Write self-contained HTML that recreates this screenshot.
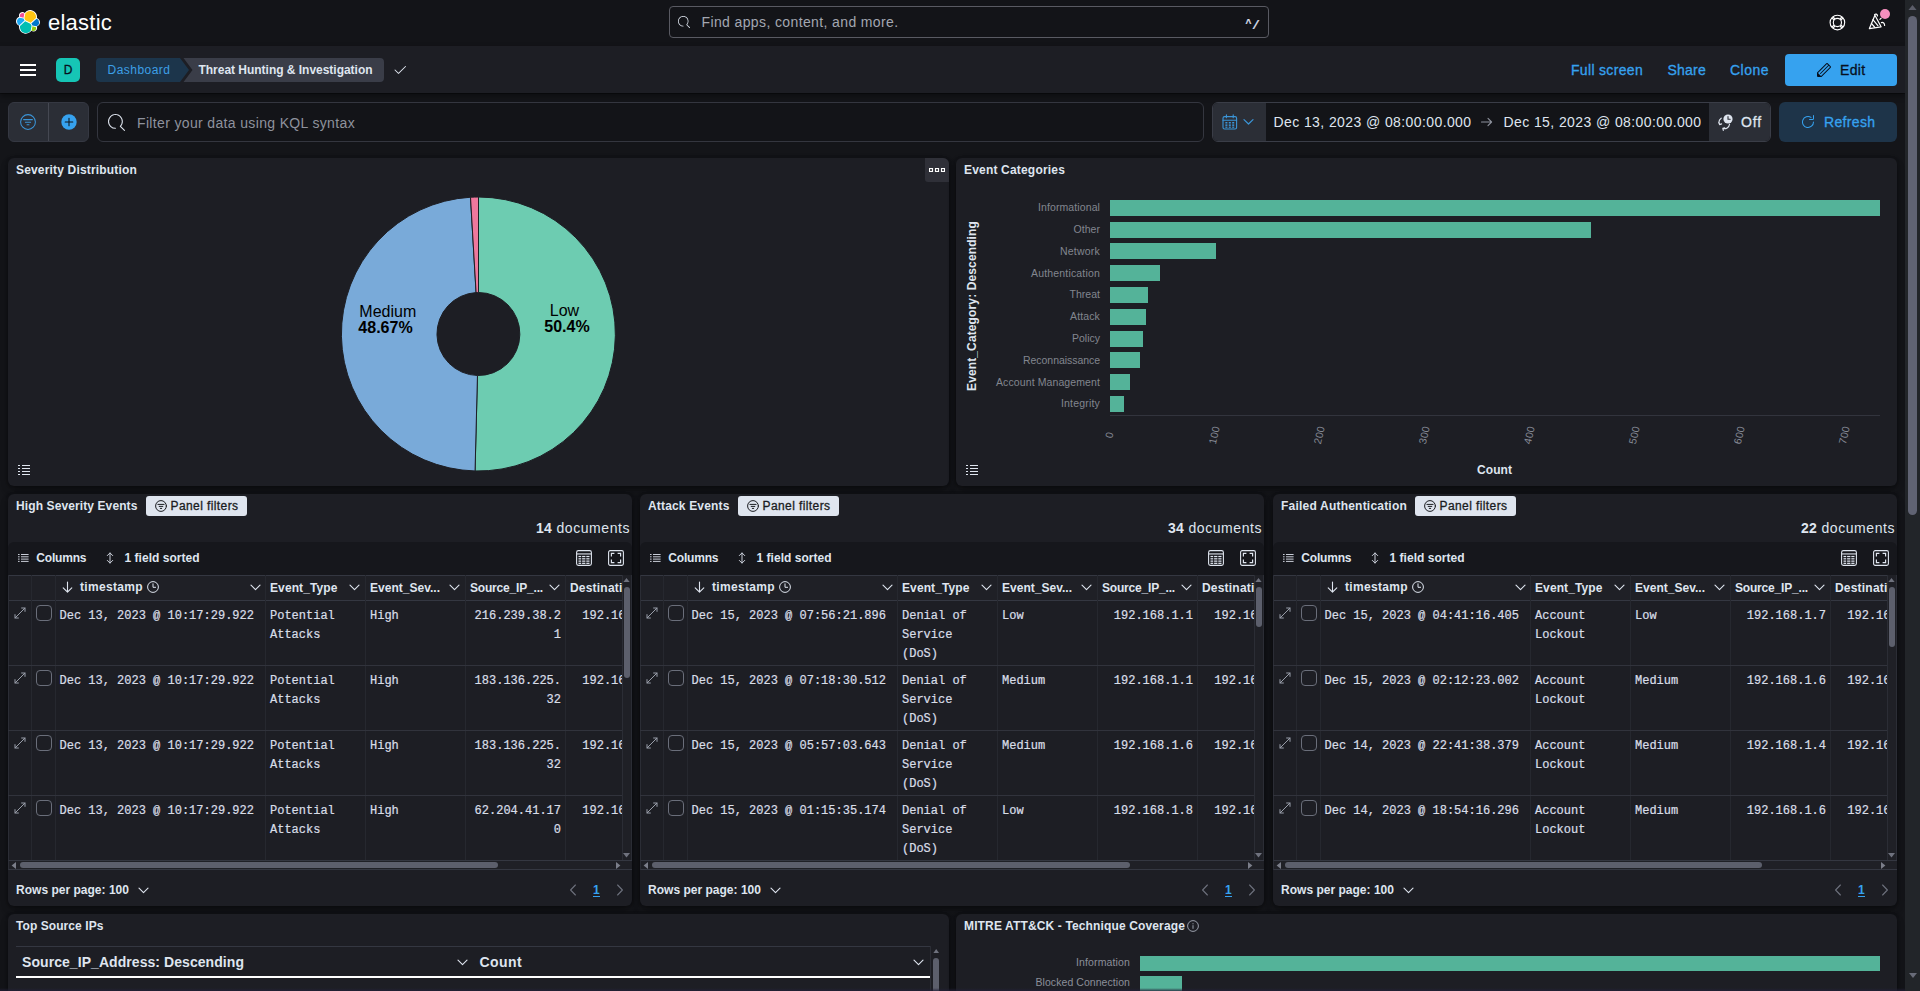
<!DOCTYPE html>
<html lang="en"><head><meta charset="utf-8"><title>Threat Hunting &amp; Investigation - Elastic</title>
<style>
html,body{margin:0;padding:0;background:#141519;}
body{width:1920px;height:991px;overflow:hidden;font-family:"Liberation Sans",sans-serif;color:#dfe5ef;-webkit-font-smoothing:antialiased;}
#root{position:relative;width:1920px;height:991px;overflow:hidden;background:#141519;}
.b{position:absolute;box-sizing:border-box;display:block;}
.t{position:absolute;white-space:pre;display:block;}
.panel{position:absolute;box-sizing:border-box;background:#1d1e24;border-radius:6px;box-shadow:0 1px 4px -1px rgba(0,0,0,.3),0 3px 8px -1px rgba(0,0,0,.22),0 6px 12px -2px rgba(0,0,0,.18),0 0 3px rgba(0,0,0,.1);}
.md{-webkit-text-stroke:0.3px currentColor;}
.m{font-family:"Liberation Mono","DejaVu Sans Mono",monospace;-webkit-text-stroke:0.22px currentColor;color:#d8dde7 !important;}

</style></head>
<body>
<div id="root">
<div class="b" style="left:0px;top:0px;width:1905px;height:46px;background:#131418;"></div>
<svg class="b" style="left:16px;top:10px;" width="24" height="24" viewBox="0 0 32 32"><g fill="none" fill-rule="evenodd"><path fill="#FFF" d="M32 16.77a6.334 6.334 0 00-1.14-3.63 6.298 6.298 0 00-3.02-2.32 9.098 9.098 0 00-.873-5.86A9.05 9.05 0 0022.663.898a9.003 9.003 0 00-5.994-.46 9.037 9.037 0 00-4.969 3.4 4.807 4.807 0 00-5.968-.06 4.868 4.868 0 00-1.58 2.34 4.903 4.903 0 00.04 2.83A6.374 6.374 0 001.16 11.28 6.41 6.41 0 000 14.94a6.343 6.343 0 001.145 3.65 6.307 6.307 0 003.035 2.32 9.038 9.038 0 001.296 6.62 8.99 8.99 0 005.526 3.86 8.926 8.926 0 003.555.08 8.957 8.957 0 003.31-1.31 9.022 9.022 0 002.507-2.53 4.772 4.772 0 002.94 1.02 4.806 4.806 0 003.96-2.06 4.866 4.866 0 00.583-4.45 6.385 6.385 0 003.016-2.34A6.42 6.42 0 0032 16.77"/><path fill="#FEC514" d="M12.58 13.787l7.002 3.211 7.066-6.213a7.849 7.849 0 00.152-1.557c0-1.692-.54-3.34-1.537-4.704a7.912 7.912 0 00-4.02-2.869 7.875 7.875 0 00-4.932.086 7.913 7.913 0 00-3.92 3.007l-1.174 6.118 1.364 2.921z"/><path fill="#00BFB3" d="M5.333 21.228a7.964 7.964 0 001.387 6.273 7.914 7.914 0 004.034 2.887 7.876 7.876 0 004.95-.097 7.916 7.916 0 003.924-3.029l1.166-6.102-1.555-2.985-7.03-3.211-6.876 6.264z"/><path fill="#F04E98" d="M5.288 9.067l4.8 1.137L11.14 4.74a3.785 3.785 0 00-4.538-.056 3.81 3.81 0 00-1.314 4.383"/><path fill="#1BA9F5" d="M4.872 10.214a5.294 5.294 0 00-2.595 1.882 5.324 5.324 0 00-.142 6.124 5.287 5.287 0 002.505 2l6.733-6.101-1.235-2.65-5.266-1.255z"/><path fill="#93C90E" d="M20.873 27.277a3.736 3.736 0 002.285.785 3.783 3.783 0 003.101-1.63 3.812 3.812 0 00.456-3.479l-4.8-1.125-1.042 5.449z"/><path fill="#07C" d="M21.848 20.563l5.284 1.242a5.34 5.34 0 002.595-1.884 5.37 5.37 0 00.143-6.14 5.33 5.33 0 00-2.505-2.01l-6.911 6.075 1.394 2.717z"/></g></svg>
<span class="t " style="left:48.00px;top:8.10px;font-size:22px;line-height:30px;color:#ffffff;letter-spacing:0.234px;">elastic</span>
<div class="b" style="left:669px;top:6px;width:600px;height:32px;background:#131418;border:1px solid #595a62;border-radius:4px;"></div>
<svg class="b" style="left:678px;top:16px;" width="12" height="12" viewBox="0 0 16 16"><path fill="#dfe5ef" d="M11.271 11.978l3.872 3.873a.502.502 0 00.708 0 .502.502 0 000-.708l-3.565-3.564c2.38-2.747 2.267-6.923-.342-9.532-2.73-2.73-7.17-2.73-9.898 0-2.728 2.729-2.728 7.17 0 9.9a6.955 6.955 0 004.949 2.05.5.5 0 000-1 5.96 5.96 0 01-4.242-1.757 6.01 6.01 0 010-8.486c2.337-2.34 6.143-2.34 8.484 0a6.01 6.01 0 010 8.486.5.5 0 00.034.738z"/></svg>
<span class="t " style="left:701.50px;top:11.50px;font-size:14px;line-height:21px;color:#a3a7b1;letter-spacing:0.379px;">Find apps, content, and more.</span>
<span class="t  m" style="left:1245.60px;top:17.40px;font-size:10px;line-height:16px;color:#ffffff;font-weight:700;">^</span>
<span class="t  m" style="left:1252.00px;top:17.90px;font-size:13px;line-height:16px;color:#ffffff;font-weight:700;">/</span>
<svg class="b" style="left:1828.5px;top:13.5px;" width="17" height="17" viewBox="0 0 17 17"><g fill="none" stroke="#fff" stroke-width="1.15"><circle cx="8.4" cy="8.5" r="7.3"/><circle cx="8.4" cy="8.5" r="4.1"/><path d="M2.7 3.9l2.5 2.1M3.9 2.7l2.1 2.5M14.3 3.9l-2.5 2.1M13.1 2.7l-2.1 2.5M2.7 13.1l2.5-2.1M3.9 14.3l2.1-2.5M14.3 13.1l-2.5-2.1M13.1 14.3l-2.1-2.5"/></g></svg>
<svg class="b" style="left:1868px;top:13px;" width="18" height="18" viewBox="0 0 18 18"><g fill="none" stroke="#fff" stroke-width="1.2" stroke-linejoin="round" stroke-linecap="round"><path d="M1.4 15.6L6.9 2.3L13.1 13.8z"/><path d="M4.9 6.6l5 6M3.4 10.4l3.1 3.6M6.6 1.6c.9-1 2.6-.6 2.9 1.2M11.9 6.4l1.2-1.1M13.4 9.6c1.8-.5 3.2.6 3.2 2.8"/></g></svg>
<div class="b" style="left:1879.7px;top:8.8px;width:10.6px;height:10.6px;background:#f68fbe;border-radius:50%;"></div>
<div class="b" style="left:0px;top:46px;width:1905px;height:47px;background:#1d1e24;box-shadow:0 1px 0 rgba(0,0,0,.35),0 3px 6px rgba(0,0,0,.4);"></div>
<div class="b" style="left:20px;top:64px;width:16px;height:2px;background:#ffffff;"></div>
<div class="b" style="left:20px;top:69px;width:16px;height:2px;background:#ffffff;"></div>
<div class="b" style="left:20px;top:74px;width:16px;height:2px;background:#ffffff;"></div>
<div class="b" style="left:56px;top:58px;width:24px;height:24px;background:#16c5b5;border-radius:5px;"></div>
<span class="t md" style="left:63.67px;top:61.00px;font-size:12px;line-height:18px;color:#07101f;">D</span>
<svg class="b" style="left:96px;top:58px" width="290" height="24" viewBox="0 0 290 24"><path d="M4 0H84L93 12L84 24H4a4 4 0 01-4-4V4a4 4 0 014-4z" fill="#1c354b"/><path d="M87.5 0H284a4 4 0 014 4v16a4 4 0 01-4 4H87.5L96.5 12z" fill="#3a3d48"/></svg>
<span class="t " style="left:107.50px;top:61.00px;font-size:12px;line-height:18px;color:#3c9fe6;letter-spacing:0.477px;">Dashboard</span>
<span class="t " style="left:198.50px;top:61.00px;font-size:12px;line-height:18px;color:#dfe5ef;font-weight:700;letter-spacing:-0.022px;">Threat Hunting &amp; Investigation</span>
<svg class="b" style="left:392px;top:62px;" width="16" height="16" viewBox="0 0 16 16"><path fill="#dfe5ef" fill-rule="evenodd" d="M6.50025 12.00025c-.128 0-.256-.049-.354-.146l-3.5-3.5c-.195-.196-.195-.512 0-.708.196-.195.512-.195.708 0l3.146 3.147 6.646-6.647c.196-.195.512-.195.708 0 .195.196.195.512 0 .708l-7 7c-.098.097-.226.146-.354.146"/></svg>
<span class="t md" style="left:1571.00px;top:59.50px;font-size:14px;line-height:21px;color:#36a2ef;letter-spacing:0.321px;">Full screen</span>
<span class="t md" style="left:1667.50px;top:59.50px;font-size:14px;line-height:21px;color:#36a2ef;letter-spacing:0.228px;">Share</span>
<span class="t md" style="left:1730.00px;top:59.50px;font-size:14px;line-height:21px;color:#36a2ef;letter-spacing:0.484px;">Clone</span>
<div class="b" style="left:1785px;top:54px;width:112px;height:32px;background:#36a2ef;border-radius:4px;"></div>
<svg class="b" style="left:1816px;top:62px;" width="16" height="16" viewBox="0 0 16 16"><path fill="#07101f" d="M12.148 3.148L11 2l-9 9v3h3l9-9-1.144-1.144-8.002 7.998a.502.502 0 01-.708 0 .502.502 0 010-.708l8.002-7.998zM11 1c.256 0 .512.098.707.293l3 3a.999.999 0 010 1.414l-9 9A.997.997 0 015 15H2a1 1 0 01-1-1v-3c0-.265.105-.52.293-.707l9-9A.997.997 0 0111 1zM5 14H2v-3l3 3z"/></svg>
<span class="t md" style="left:1840.00px;top:59.50px;font-size:14px;line-height:21px;color:#07101f;letter-spacing:0.344px;">Edit</span>
<div class="b" style="left:8px;top:102px;width:81px;height:40px;background:#2b2e36;border-radius:6px;border:1px solid #353842;"></div>
<div class="b" style="left:48px;top:103px;width:1px;height:38px;background:#454852;"></div>
<svg class="b" style="left:20px;top:114px;" width="16" height="16" viewBox="0 0 16 16"><g fill="none" stroke="#3b95d8" stroke-width="1.05" stroke-linecap="round"><circle cx="8" cy="8" r="7.4"/><path d="M3.6 5.6h8.8M5.4 8.2h5.2M7 10.8h2"/></g></svg>
<svg class="b" style="left:60.5px;top:113.5px;" width="16" height="16" viewBox="0 0 16 16"><circle cx="8" cy="8" r="7.7" fill="#36a2ef"/><path d="M8 4.2v7.6M4.2 8h7.6" stroke="#10151c" stroke-width="1.05" stroke-linecap="round"/></svg>
<div class="b" style="left:97px;top:102px;width:1107px;height:40px;background:#131418;border:1px solid #34363f;border-radius:6px;"></div>
<svg class="b" style="left:108px;top:113.5px;" width="17" height="17" viewBox="0 0 16 16"><path fill="#dfe5ef" d="M11.271 11.978l3.872 3.873a.502.502 0 00.708 0 .502.502 0 000-.708l-3.565-3.564c2.38-2.747 2.267-6.923-.342-9.532-2.73-2.73-7.17-2.73-9.898 0-2.728 2.729-2.728 7.17 0 9.9a6.955 6.955 0 004.949 2.05.5.5 0 000-1 5.96 5.96 0 01-4.242-1.757 6.01 6.01 0 010-8.486c2.337-2.34 6.143-2.34 8.484 0a6.01 6.01 0 010 8.486.5.5 0 00.034.738z"/></svg>
<span class="t " style="left:137.00px;top:112.50px;font-size:14px;line-height:21px;color:#8e929d;letter-spacing:0.349px;">Filter your data using KQL syntax</span>
<div class="b" style="left:1212px;top:102px;width:559px;height:40px;background:#131418;border:1px solid #3a3d47;border-radius:6px;overflow:hidden;"><div class="b" style="left:0;top:0;width:53px;height:38px;background:#2b2e36"></div><div class="b" style="left:496px;top:0;width:62px;height:38px;background:#2b2e36"></div></div>
<svg class="b" style="left:1222px;top:114px;" width="16" height="16" viewBox="0 0 16 16"><g fill="none" stroke="#3b95d8" stroke-width="1.1"><rect x="1" y="2.6" width="13.6" height="12.4" rx="1.6"/><path d="M1 6.2h13.6M4.4 0.8v3M11.2 0.8v3" stroke-linecap="round"/></g><g fill="#3b95d8"><rect x="3.4" y="8" width="2" height="1.5"/><rect x="6.8" y="8" width="2" height="1.5"/><rect x="10.2" y="8" width="2" height="1.5"/><rect x="3.4" y="10.4" width="2" height="1.5"/><rect x="6.8" y="10.4" width="2" height="1.5"/><rect x="10.2" y="10.4" width="2" height="1.5"/><rect x="3.4" y="12.6" width="2" height="1.2"/><rect x="6.8" y="12.6" width="2" height="1.2"/><rect x="10.2" y="12.6" width="2" height="1.2"/></g></svg>
<svg class="b" style="left:1243px;top:117px;" width="11" height="10" viewBox="0 0 11 10"><path d="M1 2.6l4.5 4.4 4.5-4.4" fill="none" stroke="#3b95d8" stroke-width="1.2" stroke-linecap="round" stroke-linejoin="round"/></svg>
<span class="t " style="left:1273.50px;top:111.50px;font-size:14px;line-height:21px;color:#dfe5ef;letter-spacing:0.407px;">Dec 13, 2023 @ 08:00:00.000</span>
<svg class="b" style="left:1480px;top:115px;" width="14" height="14" viewBox="0 0 14 14"><path d="M1.5 7h10M8 3.4L11.6 7 8 10.6" fill="none" stroke="#8e929d" stroke-width="1.1" stroke-linecap="round" stroke-linejoin="round"/></svg>
<span class="t " style="left:1503.50px;top:111.50px;font-size:14px;line-height:21px;color:#dfe5ef;letter-spacing:0.407px;">Dec 15, 2023 @ 08:00:00.000</span>
<svg class="b" style="left:1717px;top:113px;" width="18" height="18" viewBox="0 0 18 18"><g fill="none" stroke="#dfe5ef" stroke-width="1.15" stroke-linecap="round"><path d="M4.2 5.2a5.2 5.2 0 00-1.6 6.4M2.6 11.6l-.9-2M2.6 11.6l2-.7M12.6 11.2a5.2 5.2 0 01-6.8 4.2M5.8 15.4l2-.6M5.8 15.4l.5 2"/></g><circle cx="11" cy="6" r="4.6" fill="#dfe5ef"/><path d="M11 3.6V6.2h2.2" fill="none" stroke="#2b2e36" stroke-width="1.1" stroke-linecap="round"/></svg>
<span class="t md" style="left:1741.00px;top:111.50px;font-size:14px;line-height:21px;color:#dfe5ef;letter-spacing:0.861px;">Off</span>
<div class="b" style="left:1779px;top:102px;width:118px;height:40px;background:#1e3449;border-radius:6px;"></div>
<svg class="b" style="left:1800px;top:114px;" width="16" height="16" viewBox="0 0 16 16"><path fill="#36a2ef" d="M11.228 2.942a.5.5 0 11-.538.842A5 5 0 1013 8a.5.5 0 111 0 6 6 0 11-2.772-5.058zM14 1.5v3A1.5 1.5 0 0112.5 6h-3a.5.5 0 010-1h3a.5.5 0 00.5-.5v-3a.5.5 0 111 0z"/></svg>
<span class="t md" style="left:1824.00px;top:111.50px;font-size:14px;line-height:21px;color:#36a2ef;letter-spacing:0.354px;">Refresh</span>
<div class="panel" style="left:8px;top:158px;width:941px;height:328px"></div>
<span class="t " style="left:16.00px;top:161.00px;font-size:12px;line-height:18px;color:#dfe5ef;font-weight:700;letter-spacing:0.173px;">Severity Distribution</span>
<div class="b" style="left:925px;top:158px;width:24px;height:24px;background:#2f3038;border-radius:0 6px 0 3px;"></div>
<svg class="b" style="left:929px;top:168px;" width="16" height="4" viewBox="0 0 16 4"><g fill="none" stroke="#ffffff" stroke-width="1.15"><rect x="0.5" y="0.5" width="3" height="3"/><rect x="6.5" y="0.5" width="3" height="3"/><rect x="12.5" y="0.5" width="3" height="3"/></g></svg>
<svg class="b" style="left:18px;top:465px;" width="12" height="10" viewBox="0 0 12 10"><g fill="#dfe5ef"><rect x="0" y="0" width="2" height="1"/><rect x="4" y="0" width="8" height="1"/><rect x="0" y="3" width="2" height="1"/><rect x="4" y="3" width="8" height="1"/><rect x="0" y="6" width="2" height="1"/><rect x="4" y="6" width="8" height="1"/><rect x="0" y="9" width="2" height="1"/><rect x="4" y="9" width="8" height="1"/></g></svg>
<svg class="b" style="left:0;top:0" width="960" height="500" viewBox="0 0 960 500"><path d="M478.50 197.00A137 137 0 1 1 475.06 470.96L477.46 375.49A41.5 41.5 0 1 0 478.50 292.50Z" fill="#6dccb1" stroke="#1d1e24" stroke-width="1"/><path d="M475.06 470.96A137 137 0 0 1 470.50 197.23L476.08 292.57A41.5 41.5 0 0 0 477.46 375.49Z" fill="#79aad9" stroke="#1d1e24" stroke-width="1"/><path d="M470.50 197.23A137 137 0 0 1 478.50 197.00L478.50 292.50A41.5 41.5 0 0 0 476.08 292.57Z" fill="#ee789d" stroke="#1d1e24" stroke-width="1"/><g font-family="Liberation Sans, sans-serif" font-size="16" fill="#000" text-anchor="middle"><text x="387.8" y="316.6">Medium</text><text x="385.5" y="333" font-weight="700">48.67%</text><text x="564.5" y="315.6">Low</text><text x="567" y="332" font-weight="700">50.4%</text></g></svg>
<div class="panel" style="left:956px;top:158px;width:941px;height:328px"></div>
<span class="t " style="left:964.00px;top:161.00px;font-size:12px;line-height:18px;color:#dfe5ef;font-weight:700;letter-spacing:0.185px;">Event Categories</span>
<svg class="b" style="left:966px;top:465px;" width="12" height="10" viewBox="0 0 12 10"><g fill="#dfe5ef"><rect x="0" y="0" width="2" height="1"/><rect x="4" y="0" width="8" height="1"/><rect x="0" y="3" width="2" height="1"/><rect x="4" y="3" width="8" height="1"/><rect x="0" y="6" width="2" height="1"/><rect x="4" y="6" width="8" height="1"/><rect x="0" y="9" width="2" height="1"/><rect x="4" y="9" width="8" height="1"/></g></svg>
<div class="b" style="left:1110px;top:200px;width:770px;height:16px;background:#54b399;"></div>
<span class="t " style="left:1038.00px;top:200.10px;font-size:10.5px;line-height:14px;color:#82868f;letter-spacing:0.100px;">Informational</span>
<div class="b" style="left:1110px;top:222px;width:480.7px;height:16px;background:#54b399;"></div>
<span class="t " style="left:1073.50px;top:221.92px;font-size:10.5px;line-height:14px;color:#82868f;letter-spacing:0.048px;">Other</span>
<div class="b" style="left:1110px;top:243px;width:106px;height:16px;background:#54b399;"></div>
<span class="t " style="left:1060.00px;top:243.74px;font-size:10.5px;line-height:14px;color:#82868f;letter-spacing:0.213px;">Network</span>
<div class="b" style="left:1110px;top:265px;width:49.6px;height:16px;background:#54b399;"></div>
<span class="t " style="left:1031.00px;top:265.56px;font-size:10.5px;line-height:14px;color:#82868f;letter-spacing:0.175px;">Authentication</span>
<div class="b" style="left:1110px;top:287px;width:38px;height:16px;background:#54b399;"></div>
<span class="t " style="left:1069.50px;top:287.38px;font-size:10.5px;line-height:14px;color:#82868f;letter-spacing:0.026px;">Threat</span>
<div class="b" style="left:1110px;top:309px;width:36px;height:16px;background:#54b399;"></div>
<span class="t " style="left:1070.00px;top:309.20px;font-size:10.5px;line-height:14px;color:#82868f;letter-spacing:0.137px;">Attack</span>
<div class="b" style="left:1110px;top:331px;width:32.6px;height:16px;background:#54b399;"></div>
<span class="t " style="left:1072.00px;top:331.02px;font-size:10.5px;line-height:14px;color:#82868f;letter-spacing:-0.001px;">Policy</span>
<div class="b" style="left:1110px;top:352px;width:29.5px;height:16px;background:#54b399;"></div>
<span class="t " style="left:1023.00px;top:352.84px;font-size:10.5px;line-height:14px;color:#82868f;letter-spacing:-0.045px;">Reconnaissance</span>
<div class="b" style="left:1110px;top:374px;width:20px;height:16px;background:#54b399;"></div>
<span class="t " style="left:996.00px;top:374.66px;font-size:10.5px;line-height:14px;color:#82868f;letter-spacing:0.103px;">Account Management</span>
<div class="b" style="left:1110px;top:396px;width:13.8px;height:16px;background:#54b399;"></div>
<span class="t " style="left:1061.00px;top:396.48px;font-size:10.5px;line-height:14px;color:#82868f;letter-spacing:0.183px;">Integrity</span>
<div class="b" style="left:1110px;top:414.5px;width:770px;height:1px;background:#32343d;"></div>
<span class="t" style="left:1108.7px;top:435.3px;font-size:10.5px;line-height:12px;color:#858994;letter-spacing:0.25px;transform:translate(-50%,-50%) rotate(-77deg)">0</span>
<span class="t" style="left:1213.7px;top:435.3px;font-size:10.5px;line-height:12px;color:#858994;letter-spacing:0.25px;transform:translate(-50%,-50%) rotate(-77deg)">100</span>
<span class="t" style="left:1318.7px;top:435.3px;font-size:10.5px;line-height:12px;color:#858994;letter-spacing:0.25px;transform:translate(-50%,-50%) rotate(-77deg)">200</span>
<span class="t" style="left:1423.7px;top:435.3px;font-size:10.5px;line-height:12px;color:#858994;letter-spacing:0.25px;transform:translate(-50%,-50%) rotate(-77deg)">300</span>
<span class="t" style="left:1528.7px;top:435.3px;font-size:10.5px;line-height:12px;color:#858994;letter-spacing:0.25px;transform:translate(-50%,-50%) rotate(-77deg)">400</span>
<span class="t" style="left:1633.7px;top:435.3px;font-size:10.5px;line-height:12px;color:#858994;letter-spacing:0.25px;transform:translate(-50%,-50%) rotate(-77deg)">500</span>
<span class="t" style="left:1738.7px;top:435.3px;font-size:10.5px;line-height:12px;color:#858994;letter-spacing:0.25px;transform:translate(-50%,-50%) rotate(-77deg)">600</span>
<span class="t" style="left:1843.7px;top:435.3px;font-size:10.5px;line-height:12px;color:#858994;letter-spacing:0.25px;transform:translate(-50%,-50%) rotate(-77deg)">700</span>
<span class="t " style="left:1477.00px;top:461.00px;font-size:12px;line-height:18px;color:#dfe5ef;font-weight:700;letter-spacing:0.069px;">Count</span>
<span class="t" style="left:964.5px;top:391px;font-size:12px;line-height:14px;font-weight:700;color:#dfe5ef;letter-spacing:0.126px;transform-origin:0 0;transform:rotate(-90deg)">Event_Category: Descending</span>
<div class="panel" style="left:8px;top:494px;width:624px;height:412px"></div>
<span class="t " style="left:16.00px;top:497.00px;font-size:12px;line-height:18px;color:#dfe5ef;font-weight:700;letter-spacing:0.106px;">High Severity Events</span>
<div class="b" style="left:146px;top:496px;width:101px;height:20px;background:#dfe5ef;border-radius:3px;"></div>
<svg class="b" style="left:154.8px;top:500px;" width="12" height="12" viewBox="0 0 12 12"><g fill="none" stroke="#1a1c21" stroke-width="1" stroke-linecap="round"><circle cx="6" cy="6" r="5.4"/><path d="M2.9 4.4h6.2M4.2 6.4h3.6M5.3 8.4h1.4"/></g></svg>
<span class="t md" style="left:170.50px;top:497.00px;font-size:12px;line-height:18px;color:#1a1c21;letter-spacing:0.408px;">Panel filters</span>
<span class="t " style="left:536.00px;top:517.50px;font-size:14px;line-height:21px;color:#dfe5ef;font-weight:700;letter-spacing:0.214px;">14</span>
<span class="t " style="left:556.50px;top:517.50px;font-size:14px;line-height:21px;color:#dfe5ef;letter-spacing:0.557px;">documents</span>
<div class="b" style="left:8px;top:542px;width:624px;height:33px;background:#16171c;border-radius:6px 6px 0 0;"></div>
<svg class="b" style="left:17.5px;top:553.5px;" width="11" height="8" viewBox="0 0 11 8"><g fill="#c9ced8"><rect x="0" y="0" width="1.6" height="1"/><rect x="3" y="0" width="7.6" height="1"/><rect x="0" y="2.3" width="1.6" height="1"/><rect x="3" y="2.3" width="7.6" height="1"/><rect x="0" y="4.6" width="1.6" height="1"/><rect x="3" y="4.6" width="7.6" height="1"/><rect x="0" y="6.9" width="1.6" height="1"/><rect x="3" y="6.9" width="7.6" height="1"/></g></svg>
<span class="t " style="left:36.30px;top:549.00px;font-size:12px;line-height:18px;color:#dfe5ef;font-weight:700;letter-spacing:-0.191px;">Columns</span>
<svg class="b" style="left:105.5px;top:552px;" width="8" height="12" viewBox="0 0 8 12"><path d="M4 1v10M1.3 3.6L4 0.9l2.7 2.7M1.3 8.4L4 11.1l2.7-2.7" fill="none" stroke="#c9ced8" stroke-width="1" stroke-linecap="round" stroke-linejoin="round"/></svg>
<span class="t " style="left:124.50px;top:549.00px;font-size:12px;line-height:18px;color:#dfe5ef;font-weight:700;letter-spacing:0.023px;">1 field sorted</span>
<svg class="b" style="left:576px;top:550px;" width="16" height="16" viewBox="0 0 16 16"><g fill="none" stroke="#dfe5ef" stroke-width="1.1"><rect x="0.6" y="0.6" width="14.8" height="14.8" rx="1.8"/></g><g fill="#dfe5ef"><rect x="1" y="3.4" width="14" height="1.1"/><rect x="2.5" y="5.9" width="2.7" height="1.25"/><rect x="6.1" y="5.9" width="3.3" height="1.25"/><rect x="10.3" y="5.9" width="3.2" height="1.25"/><rect x="2.5" y="8.2" width="2.7" height="1.25"/><rect x="6.1" y="8.2" width="3.3" height="1.25"/><rect x="10.3" y="8.2" width="3.2" height="1.25"/><rect x="2.5" y="10.5" width="2.7" height="1.25"/><rect x="6.1" y="10.5" width="3.3" height="1.25"/><rect x="10.3" y="10.5" width="3.2" height="1.25"/><rect x="2.5" y="12.7" width="2.7" height="1.25"/><rect x="6.1" y="12.7" width="3.3" height="1.25"/><rect x="10.3" y="12.7" width="3.2" height="1.25"/></g></svg>
<svg class="b" style="left:608px;top:550px;" width="16" height="16" viewBox="0 0 16 16"><g fill="none" stroke="#dfe5ef" stroke-width="1.1"><rect x="0.6" y="0.6" width="14.8" height="14.8" rx="1.6"/><path d="M3.4 6.4V3.4h3M9.6 3.4h3v3M12.6 9.6v3h-3M6.4 12.6h-3v-3" stroke-width="1.2"/></g></svg>
<div class="b" style="left:8px;top:574.5px;width:614px;height:26px;background:#1f2026;border-top:1px solid #343741;border-bottom:1px solid #343741;"></div>
<div class="b" style="left:8px;top:600.5px;width:614px;height:260px;background:#1d1e24;"></div>
<div class="b" style="left:8px;top:574.5px;width:1px;height:286px;background:#2b2d35;"></div>
<div class="b" style="left:31px;top:575px;width:1px;height:285px;background:#26282f;"></div>
<div class="b" style="left:55px;top:575px;width:1px;height:285px;background:#26282f;"></div>
<div class="b" style="left:265px;top:575px;width:1px;height:285px;background:#26282f;"></div>
<div class="b" style="left:365px;top:575px;width:1px;height:285px;background:#26282f;"></div>
<div class="b" style="left:465px;top:575px;width:1px;height:285px;background:#26282f;"></div>
<div class="b" style="left:565px;top:575px;width:1px;height:285px;background:#26282f;"></div>
<div class="b" style="left:8px;top:665px;width:614px;height:1px;background:#31333c;"></div>
<div class="b" style="left:8px;top:730px;width:614px;height:1px;background:#31333c;"></div>
<div class="b" style="left:8px;top:795px;width:614px;height:1px;background:#31333c;"></div>
<svg class="b" style="left:62px;top:581px;" width="11" height="12" viewBox="0 0 11 12"><path d="M5.5 1v10M1.2 6.8l4.3 4.3 4.3-4.3" fill="none" stroke="#dfe5ef" stroke-width="1.1" stroke-linecap="round" stroke-linejoin="round"/></svg>
<span class="t " style="left:80.00px;top:577.50px;font-size:12px;line-height:18px;color:#dfe5ef;font-weight:700;letter-spacing:0.331px;">timestamp</span>
<svg class="b" style="left:147px;top:581px;" width="12" height="12" viewBox="0 0 12 12"><g fill="none" stroke="#dfe5ef" stroke-width="1"><circle cx="6" cy="6" r="5.4"/><path d="M6 2.8V6.3h2.6" stroke-linecap="round"/></g></svg>
<svg class="b" style="left:250px;top:583.5px;" width="11" height="7" viewBox="0 0 11 7"><path d="M1 1.2l4.5 4.4L10 1.2" fill="none" stroke="#dfe5ef" stroke-width="1.15" stroke-linecap="round" stroke-linejoin="round"/></svg>
<span class="t " style="left:270.00px;top:578.50px;font-size:12px;line-height:18px;color:#dfe5ef;font-weight:700;letter-spacing:0.103px;">Event_Type</span>
<svg class="b" style="left:349px;top:583.5px;" width="11" height="7" viewBox="0 0 11 7"><path d="M1 1.2l4.5 4.4L10 1.2" fill="none" stroke="#dfe5ef" stroke-width="1.15" stroke-linecap="round" stroke-linejoin="round"/></svg>
<span class="t " style="left:370.00px;top:578.50px;font-size:12px;line-height:18px;color:#dfe5ef;font-weight:700;letter-spacing:0.015px;">Event_Sev...</span>
<svg class="b" style="left:449px;top:583.5px;" width="11" height="7" viewBox="0 0 11 7"><path d="M1 1.2l4.5 4.4L10 1.2" fill="none" stroke="#dfe5ef" stroke-width="1.15" stroke-linecap="round" stroke-linejoin="round"/></svg>
<span class="t " style="left:470.00px;top:578.50px;font-size:12px;line-height:18px;color:#dfe5ef;font-weight:700;letter-spacing:-0.182px;">Source_IP_...</span>
<svg class="b" style="left:549px;top:583.5px;" width="11" height="7" viewBox="0 0 11 7"><path d="M1 1.2l4.5 4.4L10 1.2" fill="none" stroke="#dfe5ef" stroke-width="1.15" stroke-linecap="round" stroke-linejoin="round"/></svg>
<div class="b" style="left:566px;top:575px;width:55.5px;height:285px;overflow:hidden">
<span class="t " style="left:4.00px;top:3.50px;font-size:12px;line-height:18px;color:#dfe5ef;font-weight:700;letter-spacing:0.202px;">Destination_IP_Address</span>
<span class="t  m" style="left:16.30px;top:32.00px;font-size:12px;line-height:19px;color:#dfe5ef;">192.168.1.1</span>
<span class="t  m" style="left:16.30px;top:97.00px;font-size:12px;line-height:19px;color:#dfe5ef;">192.168.1.1</span>
<span class="t  m" style="left:16.30px;top:162.00px;font-size:12px;line-height:19px;color:#dfe5ef;">192.168.1.1</span>
<span class="t  m" style="left:16.30px;top:227.00px;font-size:12px;line-height:19px;color:#dfe5ef;">192.168.1.1</span>
</div>
<svg class="b" style="left:14px;top:607px" width="12" height="12" viewBox="0 0 12 12"><path d="M1 11L11 1M7.6 1H11v3.4M1 7.6V11h3.4" fill="none" stroke="#9a9fab" stroke-width="1" stroke-linecap="round" stroke-linejoin="round"/></svg>
<div class="b" style="left:36px;top:605.2px;width:16px;height:16px;background:#1d1e24;border:1px solid #6a6e7a;border-radius:4px;"></div>
<span class="t  m" style="left:59.50px;top:607.00px;font-size:12px;line-height:19px;color:#dfe5ef;">Dec 13, 2023 @ 10:17:29.922</span>
<span class="t  m" style="left:270.00px;top:607.00px;font-size:12px;line-height:19px;color:#dfe5ef;">Potential</span>
<span class="t  m" style="left:270.00px;top:626.00px;font-size:12px;line-height:19px;color:#dfe5ef;">Attacks</span>
<span class="t  m" style="left:370.00px;top:607.00px;font-size:12px;line-height:19px;color:#dfe5ef;">High</span>
<span class="t  m" style="left:474.59px;top:607.00px;font-size:12px;line-height:19px;color:#dfe5ef;">216.239.38.2</span>
<span class="t  m" style="left:553.80px;top:626.00px;font-size:12px;line-height:19px;color:#dfe5ef;">1</span>
<svg class="b" style="left:14px;top:672px" width="12" height="12" viewBox="0 0 12 12"><path d="M1 11L11 1M7.6 1H11v3.4M1 7.6V11h3.4" fill="none" stroke="#9a9fab" stroke-width="1" stroke-linecap="round" stroke-linejoin="round"/></svg>
<div class="b" style="left:36px;top:670.2px;width:16px;height:16px;background:#1d1e24;border:1px solid #6a6e7a;border-radius:4px;"></div>
<span class="t  m" style="left:59.50px;top:672.00px;font-size:12px;line-height:19px;color:#dfe5ef;">Dec 13, 2023 @ 10:17:29.922</span>
<span class="t  m" style="left:270.00px;top:672.00px;font-size:12px;line-height:19px;color:#dfe5ef;">Potential</span>
<span class="t  m" style="left:270.00px;top:691.00px;font-size:12px;line-height:19px;color:#dfe5ef;">Attacks</span>
<span class="t  m" style="left:370.00px;top:672.00px;font-size:12px;line-height:19px;color:#dfe5ef;">High</span>
<span class="t  m" style="left:474.59px;top:672.00px;font-size:12px;line-height:19px;color:#dfe5ef;">183.136.225.</span>
<span class="t  m" style="left:546.60px;top:691.00px;font-size:12px;line-height:19px;color:#dfe5ef;">32</span>
<svg class="b" style="left:14px;top:737px" width="12" height="12" viewBox="0 0 12 12"><path d="M1 11L11 1M7.6 1H11v3.4M1 7.6V11h3.4" fill="none" stroke="#9a9fab" stroke-width="1" stroke-linecap="round" stroke-linejoin="round"/></svg>
<div class="b" style="left:36px;top:735.2px;width:16px;height:16px;background:#1d1e24;border:1px solid #6a6e7a;border-radius:4px;"></div>
<span class="t  m" style="left:59.50px;top:737.00px;font-size:12px;line-height:19px;color:#dfe5ef;">Dec 13, 2023 @ 10:17:29.922</span>
<span class="t  m" style="left:270.00px;top:737.00px;font-size:12px;line-height:19px;color:#dfe5ef;">Potential</span>
<span class="t  m" style="left:270.00px;top:756.00px;font-size:12px;line-height:19px;color:#dfe5ef;">Attacks</span>
<span class="t  m" style="left:370.00px;top:737.00px;font-size:12px;line-height:19px;color:#dfe5ef;">High</span>
<span class="t  m" style="left:474.59px;top:737.00px;font-size:12px;line-height:19px;color:#dfe5ef;">183.136.225.</span>
<span class="t  m" style="left:546.60px;top:756.00px;font-size:12px;line-height:19px;color:#dfe5ef;">32</span>
<div class="b" style="left:8px;top:795.5px;width:558px;height:64.5px;overflow:hidden">
<svg class="b" style="left:6px;top:6.5px" width="12" height="12" viewBox="0 0 12 12"><path d="M1 11L11 1M7.6 1H11v3.4M1 7.6V11h3.4" fill="none" stroke="#9a9fab" stroke-width="1" stroke-linecap="round" stroke-linejoin="round"/></svg>
<div class="b" style="left:28px;top:4.7px;width:16px;height:16px;background:#1d1e24;border:1px solid #6a6e7a;border-radius:4px;"></div>
<span class="t  m" style="left:51.50px;top:6.50px;font-size:12px;line-height:19px;color:#dfe5ef;">Dec 13, 2023 @ 10:17:29.922</span>
<span class="t  m" style="left:262.00px;top:6.50px;font-size:12px;line-height:19px;color:#dfe5ef;">Potential</span>
<span class="t  m" style="left:262.00px;top:25.50px;font-size:12px;line-height:19px;color:#dfe5ef;">Attacks</span>
<span class="t  m" style="left:362.00px;top:6.50px;font-size:12px;line-height:19px;color:#dfe5ef;">High</span>
<span class="t  m" style="left:466.59px;top:6.50px;font-size:12px;line-height:19px;color:#dfe5ef;">62.204.41.17</span>
<span class="t  m" style="left:545.80px;top:25.50px;font-size:12px;line-height:19px;color:#dfe5ef;">0</span>
</div>
<div class="b" style="left:622px;top:575px;width:10px;height:285px;background:#1f2026;border-left:1px solid #2b2d35;"></div>
<svg class="b" style="left:623.4px;top:577.5px;" width="7" height="4.5" viewBox="0 0 7 4.5"><path d="M0 4.5L3.5 0 7 4.5z" fill="#6f727e"/></svg>
<div class="b" style="left:624.2px;top:587px;width:6px;height:91px;background:#5c5f6c;border-radius:3px;"></div>
<svg class="b" style="left:623.4px;top:853px;" width="7" height="4.5" viewBox="0 0 7 4.5"><path d="M0 0h7L3.5 4.5z" fill="#6f727e"/></svg>
<div class="b" style="left:631px;top:575px;width:1px;height:285px;background:#2b2d35;"></div>
<div class="b" style="left:8px;top:859.5px;width:624px;height:10.5px;background:#1f2026;border-top:1px solid #343741;border-bottom:1px solid #343741;border-left:1px solid #2b2d35;"></div>
<svg class="b" style="left:11px;top:862px;" width="5" height="7" viewBox="0 0 5 7"><path d="M5 0v7L0.6 3.5z" fill="#7b7e8a"/></svg>
<div class="b" style="left:20px;top:862px;width:478px;height:6px;background:#5c5f6c;border-radius:3px;"></div>
<svg class="b" style="left:616px;top:862px;" width="5" height="7" viewBox="0 0 5 7"><path d="M0 0v7l4.4-3.5z" fill="#7b7e8a"/></svg>
<span class="t " style="left:16.00px;top:881.00px;font-size:12px;line-height:18px;color:#dfe5ef;font-weight:700;letter-spacing:0.016px;">Rows per page: 100</span>
<svg class="b" style="left:137.5px;top:887px;" width="11" height="7" viewBox="0 0 11 7"><path d="M1 1.2l4.5 4.4L10 1.2" fill="none" stroke="#dfe5ef" stroke-width="1.15" stroke-linecap="round" stroke-linejoin="round"/></svg>
<svg class="b" style="left:569px;top:884px;" width="8" height="12" viewBox="0 0 8 12"><path d="M6.4 1L1.6 6l4.8 5" fill="none" stroke="#6d717d" stroke-width="1.1" stroke-linecap="round" stroke-linejoin="round"/></svg>
<span class="t " style="left:593.00px;top:881.00px;font-size:12px;line-height:18px;color:#36a2ef;font-weight:700;letter-spacing:0.326px;text-decoration:underline;text-underline-offset:2px;">1</span>
<svg class="b" style="left:615.5px;top:884px;" width="8" height="12" viewBox="0 0 8 12"><path d="M1.6 1l4.8 5-4.8 5" fill="none" stroke="#6d717d" stroke-width="1.1" stroke-linecap="round" stroke-linejoin="round"/></svg>
<div class="panel" style="left:640px;top:494px;width:624px;height:412px"></div>
<span class="t " style="left:648.00px;top:497.00px;font-size:12px;line-height:18px;color:#dfe5ef;font-weight:700;letter-spacing:0.164px;">Attack Events</span>
<div class="b" style="left:738px;top:496px;width:101px;height:20px;background:#dfe5ef;border-radius:3px;"></div>
<svg class="b" style="left:746.8px;top:500px;" width="12" height="12" viewBox="0 0 12 12"><g fill="none" stroke="#1a1c21" stroke-width="1" stroke-linecap="round"><circle cx="6" cy="6" r="5.4"/><path d="M2.9 4.4h6.2M4.2 6.4h3.6M5.3 8.4h1.4"/></g></svg>
<span class="t md" style="left:762.50px;top:497.00px;font-size:12px;line-height:18px;color:#1a1c21;letter-spacing:0.408px;">Panel filters</span>
<span class="t " style="left:1168.00px;top:517.50px;font-size:14px;line-height:21px;color:#dfe5ef;font-weight:700;letter-spacing:0.214px;">34</span>
<span class="t " style="left:1188.50px;top:517.50px;font-size:14px;line-height:21px;color:#dfe5ef;letter-spacing:0.557px;">documents</span>
<div class="b" style="left:640px;top:542px;width:624px;height:33px;background:#16171c;border-radius:6px 6px 0 0;"></div>
<svg class="b" style="left:649.5px;top:553.5px;" width="11" height="8" viewBox="0 0 11 8"><g fill="#c9ced8"><rect x="0" y="0" width="1.6" height="1"/><rect x="3" y="0" width="7.6" height="1"/><rect x="0" y="2.3" width="1.6" height="1"/><rect x="3" y="2.3" width="7.6" height="1"/><rect x="0" y="4.6" width="1.6" height="1"/><rect x="3" y="4.6" width="7.6" height="1"/><rect x="0" y="6.9" width="1.6" height="1"/><rect x="3" y="6.9" width="7.6" height="1"/></g></svg>
<span class="t " style="left:668.30px;top:549.00px;font-size:12px;line-height:18px;color:#dfe5ef;font-weight:700;letter-spacing:-0.191px;">Columns</span>
<svg class="b" style="left:737.5px;top:552px;" width="8" height="12" viewBox="0 0 8 12"><path d="M4 1v10M1.3 3.6L4 0.9l2.7 2.7M1.3 8.4L4 11.1l2.7-2.7" fill="none" stroke="#c9ced8" stroke-width="1" stroke-linecap="round" stroke-linejoin="round"/></svg>
<span class="t " style="left:756.50px;top:549.00px;font-size:12px;line-height:18px;color:#dfe5ef;font-weight:700;letter-spacing:0.023px;">1 field sorted</span>
<svg class="b" style="left:1208px;top:550px;" width="16" height="16" viewBox="0 0 16 16"><g fill="none" stroke="#dfe5ef" stroke-width="1.1"><rect x="0.6" y="0.6" width="14.8" height="14.8" rx="1.8"/></g><g fill="#dfe5ef"><rect x="1" y="3.4" width="14" height="1.1"/><rect x="2.5" y="5.9" width="2.7" height="1.25"/><rect x="6.1" y="5.9" width="3.3" height="1.25"/><rect x="10.3" y="5.9" width="3.2" height="1.25"/><rect x="2.5" y="8.2" width="2.7" height="1.25"/><rect x="6.1" y="8.2" width="3.3" height="1.25"/><rect x="10.3" y="8.2" width="3.2" height="1.25"/><rect x="2.5" y="10.5" width="2.7" height="1.25"/><rect x="6.1" y="10.5" width="3.3" height="1.25"/><rect x="10.3" y="10.5" width="3.2" height="1.25"/><rect x="2.5" y="12.7" width="2.7" height="1.25"/><rect x="6.1" y="12.7" width="3.3" height="1.25"/><rect x="10.3" y="12.7" width="3.2" height="1.25"/></g></svg>
<svg class="b" style="left:1240px;top:550px;" width="16" height="16" viewBox="0 0 16 16"><g fill="none" stroke="#dfe5ef" stroke-width="1.1"><rect x="0.6" y="0.6" width="14.8" height="14.8" rx="1.6"/><path d="M3.4 6.4V3.4h3M9.6 3.4h3v3M12.6 9.6v3h-3M6.4 12.6h-3v-3" stroke-width="1.2"/></g></svg>
<div class="b" style="left:640px;top:574.5px;width:614px;height:26px;background:#1f2026;border-top:1px solid #343741;border-bottom:1px solid #343741;"></div>
<div class="b" style="left:640px;top:600.5px;width:614px;height:260px;background:#1d1e24;"></div>
<div class="b" style="left:640px;top:574.5px;width:1px;height:286px;background:#2b2d35;"></div>
<div class="b" style="left:663px;top:575px;width:1px;height:285px;background:#26282f;"></div>
<div class="b" style="left:687px;top:575px;width:1px;height:285px;background:#26282f;"></div>
<div class="b" style="left:897px;top:575px;width:1px;height:285px;background:#26282f;"></div>
<div class="b" style="left:997px;top:575px;width:1px;height:285px;background:#26282f;"></div>
<div class="b" style="left:1097px;top:575px;width:1px;height:285px;background:#26282f;"></div>
<div class="b" style="left:1197px;top:575px;width:1px;height:285px;background:#26282f;"></div>
<div class="b" style="left:640px;top:665px;width:614px;height:1px;background:#31333c;"></div>
<div class="b" style="left:640px;top:730px;width:614px;height:1px;background:#31333c;"></div>
<div class="b" style="left:640px;top:795px;width:614px;height:1px;background:#31333c;"></div>
<svg class="b" style="left:694px;top:581px;" width="11" height="12" viewBox="0 0 11 12"><path d="M5.5 1v10M1.2 6.8l4.3 4.3 4.3-4.3" fill="none" stroke="#dfe5ef" stroke-width="1.1" stroke-linecap="round" stroke-linejoin="round"/></svg>
<span class="t " style="left:712.00px;top:577.50px;font-size:12px;line-height:18px;color:#dfe5ef;font-weight:700;letter-spacing:0.331px;">timestamp</span>
<svg class="b" style="left:779px;top:581px;" width="12" height="12" viewBox="0 0 12 12"><g fill="none" stroke="#dfe5ef" stroke-width="1"><circle cx="6" cy="6" r="5.4"/><path d="M6 2.8V6.3h2.6" stroke-linecap="round"/></g></svg>
<svg class="b" style="left:882px;top:583.5px;" width="11" height="7" viewBox="0 0 11 7"><path d="M1 1.2l4.5 4.4L10 1.2" fill="none" stroke="#dfe5ef" stroke-width="1.15" stroke-linecap="round" stroke-linejoin="round"/></svg>
<span class="t " style="left:902.00px;top:578.50px;font-size:12px;line-height:18px;color:#dfe5ef;font-weight:700;letter-spacing:0.103px;">Event_Type</span>
<svg class="b" style="left:981px;top:583.5px;" width="11" height="7" viewBox="0 0 11 7"><path d="M1 1.2l4.5 4.4L10 1.2" fill="none" stroke="#dfe5ef" stroke-width="1.15" stroke-linecap="round" stroke-linejoin="round"/></svg>
<span class="t " style="left:1002.00px;top:578.50px;font-size:12px;line-height:18px;color:#dfe5ef;font-weight:700;letter-spacing:0.015px;">Event_Sev...</span>
<svg class="b" style="left:1081px;top:583.5px;" width="11" height="7" viewBox="0 0 11 7"><path d="M1 1.2l4.5 4.4L10 1.2" fill="none" stroke="#dfe5ef" stroke-width="1.15" stroke-linecap="round" stroke-linejoin="round"/></svg>
<span class="t " style="left:1102.00px;top:578.50px;font-size:12px;line-height:18px;color:#dfe5ef;font-weight:700;letter-spacing:-0.182px;">Source_IP_...</span>
<svg class="b" style="left:1181px;top:583.5px;" width="11" height="7" viewBox="0 0 11 7"><path d="M1 1.2l4.5 4.4L10 1.2" fill="none" stroke="#dfe5ef" stroke-width="1.15" stroke-linecap="round" stroke-linejoin="round"/></svg>
<div class="b" style="left:1198px;top:575px;width:55.5px;height:285px;overflow:hidden">
<span class="t " style="left:4.00px;top:3.50px;font-size:12px;line-height:18px;color:#dfe5ef;font-weight:700;letter-spacing:0.202px;">Destination_IP_Address</span>
<span class="t  m" style="left:16.30px;top:32.00px;font-size:12px;line-height:19px;color:#dfe5ef;">192.168.1.1</span>
<span class="t  m" style="left:16.30px;top:97.00px;font-size:12px;line-height:19px;color:#dfe5ef;">192.168.1.1</span>
<span class="t  m" style="left:16.30px;top:162.00px;font-size:12px;line-height:19px;color:#dfe5ef;">192.168.1.1</span>
<span class="t  m" style="left:16.30px;top:227.00px;font-size:12px;line-height:19px;color:#dfe5ef;">192.168.1.1</span>
</div>
<svg class="b" style="left:646px;top:607px" width="12" height="12" viewBox="0 0 12 12"><path d="M1 11L11 1M7.6 1H11v3.4M1 7.6V11h3.4" fill="none" stroke="#9a9fab" stroke-width="1" stroke-linecap="round" stroke-linejoin="round"/></svg>
<div class="b" style="left:668px;top:605.2px;width:16px;height:16px;background:#1d1e24;border:1px solid #6a6e7a;border-radius:4px;"></div>
<span class="t  m" style="left:691.50px;top:607.00px;font-size:12px;line-height:19px;color:#dfe5ef;">Dec 15, 2023 @ 07:56:21.896</span>
<span class="t  m" style="left:902.00px;top:607.00px;font-size:12px;line-height:19px;color:#dfe5ef;">Denial of</span>
<span class="t  m" style="left:902.00px;top:626.00px;font-size:12px;line-height:19px;color:#dfe5ef;">Service</span>
<span class="t  m" style="left:902.00px;top:645.00px;font-size:12px;line-height:19px;color:#dfe5ef;">(DoS)</span>
<span class="t  m" style="left:1002.00px;top:607.00px;font-size:12px;line-height:19px;color:#dfe5ef;">Low</span>
<span class="t  m" style="left:1113.79px;top:607.00px;font-size:12px;line-height:19px;color:#dfe5ef;">192.168.1.1</span>
<svg class="b" style="left:646px;top:672px" width="12" height="12" viewBox="0 0 12 12"><path d="M1 11L11 1M7.6 1H11v3.4M1 7.6V11h3.4" fill="none" stroke="#9a9fab" stroke-width="1" stroke-linecap="round" stroke-linejoin="round"/></svg>
<div class="b" style="left:668px;top:670.2px;width:16px;height:16px;background:#1d1e24;border:1px solid #6a6e7a;border-radius:4px;"></div>
<span class="t  m" style="left:691.50px;top:672.00px;font-size:12px;line-height:19px;color:#dfe5ef;">Dec 15, 2023 @ 07:18:30.512</span>
<span class="t  m" style="left:902.00px;top:672.00px;font-size:12px;line-height:19px;color:#dfe5ef;">Denial of</span>
<span class="t  m" style="left:902.00px;top:691.00px;font-size:12px;line-height:19px;color:#dfe5ef;">Service</span>
<span class="t  m" style="left:902.00px;top:710.00px;font-size:12px;line-height:19px;color:#dfe5ef;">(DoS)</span>
<span class="t  m" style="left:1002.00px;top:672.00px;font-size:12px;line-height:19px;color:#dfe5ef;">Medium</span>
<span class="t  m" style="left:1113.79px;top:672.00px;font-size:12px;line-height:19px;color:#dfe5ef;">192.168.1.1</span>
<svg class="b" style="left:646px;top:737px" width="12" height="12" viewBox="0 0 12 12"><path d="M1 11L11 1M7.6 1H11v3.4M1 7.6V11h3.4" fill="none" stroke="#9a9fab" stroke-width="1" stroke-linecap="round" stroke-linejoin="round"/></svg>
<div class="b" style="left:668px;top:735.2px;width:16px;height:16px;background:#1d1e24;border:1px solid #6a6e7a;border-radius:4px;"></div>
<span class="t  m" style="left:691.50px;top:737.00px;font-size:12px;line-height:19px;color:#dfe5ef;">Dec 15, 2023 @ 05:57:03.643</span>
<span class="t  m" style="left:902.00px;top:737.00px;font-size:12px;line-height:19px;color:#dfe5ef;">Denial of</span>
<span class="t  m" style="left:902.00px;top:756.00px;font-size:12px;line-height:19px;color:#dfe5ef;">Service</span>
<span class="t  m" style="left:902.00px;top:775.00px;font-size:12px;line-height:19px;color:#dfe5ef;">(DoS)</span>
<span class="t  m" style="left:1002.00px;top:737.00px;font-size:12px;line-height:19px;color:#dfe5ef;">Medium</span>
<span class="t  m" style="left:1113.79px;top:737.00px;font-size:12px;line-height:19px;color:#dfe5ef;">192.168.1.6</span>
<div class="b" style="left:640px;top:795.5px;width:558px;height:64.5px;overflow:hidden">
<svg class="b" style="left:6px;top:6.5px" width="12" height="12" viewBox="0 0 12 12"><path d="M1 11L11 1M7.6 1H11v3.4M1 7.6V11h3.4" fill="none" stroke="#9a9fab" stroke-width="1" stroke-linecap="round" stroke-linejoin="round"/></svg>
<div class="b" style="left:28px;top:4.7px;width:16px;height:16px;background:#1d1e24;border:1px solid #6a6e7a;border-radius:4px;"></div>
<span class="t  m" style="left:51.50px;top:6.50px;font-size:12px;line-height:19px;color:#dfe5ef;">Dec 15, 2023 @ 01:15:35.174</span>
<span class="t  m" style="left:262.00px;top:6.50px;font-size:12px;line-height:19px;color:#dfe5ef;">Denial of</span>
<span class="t  m" style="left:262.00px;top:25.50px;font-size:12px;line-height:19px;color:#dfe5ef;">Service</span>
<span class="t  m" style="left:262.00px;top:44.50px;font-size:12px;line-height:19px;color:#dfe5ef;">(DoS)</span>
<span class="t  m" style="left:362.00px;top:6.50px;font-size:12px;line-height:19px;color:#dfe5ef;">Low</span>
<span class="t  m" style="left:473.79px;top:6.50px;font-size:12px;line-height:19px;color:#dfe5ef;">192.168.1.8</span>
</div>
<div class="b" style="left:1254px;top:575px;width:10px;height:285px;background:#1f2026;border-left:1px solid #2b2d35;"></div>
<svg class="b" style="left:1255.4px;top:577.5px;" width="7" height="4.5" viewBox="0 0 7 4.5"><path d="M0 4.5L3.5 0 7 4.5z" fill="#6f727e"/></svg>
<div class="b" style="left:1256.2px;top:587px;width:6px;height:40px;background:#5c5f6c;border-radius:3px;"></div>
<svg class="b" style="left:1255.4px;top:853px;" width="7" height="4.5" viewBox="0 0 7 4.5"><path d="M0 0h7L3.5 4.5z" fill="#6f727e"/></svg>
<div class="b" style="left:1263px;top:575px;width:1px;height:285px;background:#2b2d35;"></div>
<div class="b" style="left:640px;top:859.5px;width:624px;height:10.5px;background:#1f2026;border-top:1px solid #343741;border-bottom:1px solid #343741;border-left:1px solid #2b2d35;"></div>
<svg class="b" style="left:643px;top:862px;" width="5" height="7" viewBox="0 0 5 7"><path d="M5 0v7L0.6 3.5z" fill="#7b7e8a"/></svg>
<div class="b" style="left:652px;top:862px;width:478px;height:6px;background:#5c5f6c;border-radius:3px;"></div>
<svg class="b" style="left:1248px;top:862px;" width="5" height="7" viewBox="0 0 5 7"><path d="M0 0v7l4.4-3.5z" fill="#7b7e8a"/></svg>
<span class="t " style="left:648.00px;top:881.00px;font-size:12px;line-height:18px;color:#dfe5ef;font-weight:700;letter-spacing:0.016px;">Rows per page: 100</span>
<svg class="b" style="left:769.5px;top:887px;" width="11" height="7" viewBox="0 0 11 7"><path d="M1 1.2l4.5 4.4L10 1.2" fill="none" stroke="#dfe5ef" stroke-width="1.15" stroke-linecap="round" stroke-linejoin="round"/></svg>
<svg class="b" style="left:1201px;top:884px;" width="8" height="12" viewBox="0 0 8 12"><path d="M6.4 1L1.6 6l4.8 5" fill="none" stroke="#6d717d" stroke-width="1.1" stroke-linecap="round" stroke-linejoin="round"/></svg>
<span class="t " style="left:1225.00px;top:881.00px;font-size:12px;line-height:18px;color:#36a2ef;font-weight:700;letter-spacing:0.326px;text-decoration:underline;text-underline-offset:2px;">1</span>
<svg class="b" style="left:1247.5px;top:884px;" width="8" height="12" viewBox="0 0 8 12"><path d="M1.6 1l4.8 5-4.8 5" fill="none" stroke="#6d717d" stroke-width="1.1" stroke-linecap="round" stroke-linejoin="round"/></svg>
<div class="panel" style="left:1273px;top:494px;width:624px;height:412px"></div>
<span class="t " style="left:1281.00px;top:497.00px;font-size:12px;line-height:18px;color:#dfe5ef;font-weight:700;letter-spacing:0.211px;">Failed Authentication</span>
<div class="b" style="left:1415px;top:496px;width:101px;height:20px;background:#dfe5ef;border-radius:3px;"></div>
<svg class="b" style="left:1423.8px;top:500px;" width="12" height="12" viewBox="0 0 12 12"><g fill="none" stroke="#1a1c21" stroke-width="1" stroke-linecap="round"><circle cx="6" cy="6" r="5.4"/><path d="M2.9 4.4h6.2M4.2 6.4h3.6M5.3 8.4h1.4"/></g></svg>
<span class="t md" style="left:1439.50px;top:497.00px;font-size:12px;line-height:18px;color:#1a1c21;letter-spacing:0.408px;">Panel filters</span>
<span class="t " style="left:1801.00px;top:517.50px;font-size:14px;line-height:21px;color:#dfe5ef;font-weight:700;letter-spacing:0.214px;">22</span>
<span class="t " style="left:1821.50px;top:517.50px;font-size:14px;line-height:21px;color:#dfe5ef;letter-spacing:0.557px;">documents</span>
<div class="b" style="left:1273px;top:542px;width:624px;height:33px;background:#16171c;border-radius:6px 6px 0 0;"></div>
<svg class="b" style="left:1282.5px;top:553.5px;" width="11" height="8" viewBox="0 0 11 8"><g fill="#c9ced8"><rect x="0" y="0" width="1.6" height="1"/><rect x="3" y="0" width="7.6" height="1"/><rect x="0" y="2.3" width="1.6" height="1"/><rect x="3" y="2.3" width="7.6" height="1"/><rect x="0" y="4.6" width="1.6" height="1"/><rect x="3" y="4.6" width="7.6" height="1"/><rect x="0" y="6.9" width="1.6" height="1"/><rect x="3" y="6.9" width="7.6" height="1"/></g></svg>
<span class="t " style="left:1301.30px;top:549.00px;font-size:12px;line-height:18px;color:#dfe5ef;font-weight:700;letter-spacing:-0.191px;">Columns</span>
<svg class="b" style="left:1370.5px;top:552px;" width="8" height="12" viewBox="0 0 8 12"><path d="M4 1v10M1.3 3.6L4 0.9l2.7 2.7M1.3 8.4L4 11.1l2.7-2.7" fill="none" stroke="#c9ced8" stroke-width="1" stroke-linecap="round" stroke-linejoin="round"/></svg>
<span class="t " style="left:1389.50px;top:549.00px;font-size:12px;line-height:18px;color:#dfe5ef;font-weight:700;letter-spacing:0.023px;">1 field sorted</span>
<svg class="b" style="left:1841px;top:550px;" width="16" height="16" viewBox="0 0 16 16"><g fill="none" stroke="#dfe5ef" stroke-width="1.1"><rect x="0.6" y="0.6" width="14.8" height="14.8" rx="1.8"/></g><g fill="#dfe5ef"><rect x="1" y="3.4" width="14" height="1.1"/><rect x="2.5" y="5.9" width="2.7" height="1.25"/><rect x="6.1" y="5.9" width="3.3" height="1.25"/><rect x="10.3" y="5.9" width="3.2" height="1.25"/><rect x="2.5" y="8.2" width="2.7" height="1.25"/><rect x="6.1" y="8.2" width="3.3" height="1.25"/><rect x="10.3" y="8.2" width="3.2" height="1.25"/><rect x="2.5" y="10.5" width="2.7" height="1.25"/><rect x="6.1" y="10.5" width="3.3" height="1.25"/><rect x="10.3" y="10.5" width="3.2" height="1.25"/><rect x="2.5" y="12.7" width="2.7" height="1.25"/><rect x="6.1" y="12.7" width="3.3" height="1.25"/><rect x="10.3" y="12.7" width="3.2" height="1.25"/></g></svg>
<svg class="b" style="left:1873px;top:550px;" width="16" height="16" viewBox="0 0 16 16"><g fill="none" stroke="#dfe5ef" stroke-width="1.1"><rect x="0.6" y="0.6" width="14.8" height="14.8" rx="1.6"/><path d="M3.4 6.4V3.4h3M9.6 3.4h3v3M12.6 9.6v3h-3M6.4 12.6h-3v-3" stroke-width="1.2"/></g></svg>
<div class="b" style="left:1273px;top:574.5px;width:614px;height:26px;background:#1f2026;border-top:1px solid #343741;border-bottom:1px solid #343741;"></div>
<div class="b" style="left:1273px;top:600.5px;width:614px;height:260px;background:#1d1e24;"></div>
<div class="b" style="left:1273px;top:574.5px;width:1px;height:286px;background:#2b2d35;"></div>
<div class="b" style="left:1296px;top:575px;width:1px;height:285px;background:#26282f;"></div>
<div class="b" style="left:1320px;top:575px;width:1px;height:285px;background:#26282f;"></div>
<div class="b" style="left:1530px;top:575px;width:1px;height:285px;background:#26282f;"></div>
<div class="b" style="left:1630px;top:575px;width:1px;height:285px;background:#26282f;"></div>
<div class="b" style="left:1730px;top:575px;width:1px;height:285px;background:#26282f;"></div>
<div class="b" style="left:1830px;top:575px;width:1px;height:285px;background:#26282f;"></div>
<div class="b" style="left:1273px;top:665px;width:614px;height:1px;background:#31333c;"></div>
<div class="b" style="left:1273px;top:730px;width:614px;height:1px;background:#31333c;"></div>
<div class="b" style="left:1273px;top:795px;width:614px;height:1px;background:#31333c;"></div>
<svg class="b" style="left:1327px;top:581px;" width="11" height="12" viewBox="0 0 11 12"><path d="M5.5 1v10M1.2 6.8l4.3 4.3 4.3-4.3" fill="none" stroke="#dfe5ef" stroke-width="1.1" stroke-linecap="round" stroke-linejoin="round"/></svg>
<span class="t " style="left:1345.00px;top:577.50px;font-size:12px;line-height:18px;color:#dfe5ef;font-weight:700;letter-spacing:0.331px;">timestamp</span>
<svg class="b" style="left:1412px;top:581px;" width="12" height="12" viewBox="0 0 12 12"><g fill="none" stroke="#dfe5ef" stroke-width="1"><circle cx="6" cy="6" r="5.4"/><path d="M6 2.8V6.3h2.6" stroke-linecap="round"/></g></svg>
<svg class="b" style="left:1515px;top:583.5px;" width="11" height="7" viewBox="0 0 11 7"><path d="M1 1.2l4.5 4.4L10 1.2" fill="none" stroke="#dfe5ef" stroke-width="1.15" stroke-linecap="round" stroke-linejoin="round"/></svg>
<span class="t " style="left:1535.00px;top:578.50px;font-size:12px;line-height:18px;color:#dfe5ef;font-weight:700;letter-spacing:0.103px;">Event_Type</span>
<svg class="b" style="left:1614px;top:583.5px;" width="11" height="7" viewBox="0 0 11 7"><path d="M1 1.2l4.5 4.4L10 1.2" fill="none" stroke="#dfe5ef" stroke-width="1.15" stroke-linecap="round" stroke-linejoin="round"/></svg>
<span class="t " style="left:1635.00px;top:578.50px;font-size:12px;line-height:18px;color:#dfe5ef;font-weight:700;letter-spacing:0.015px;">Event_Sev...</span>
<svg class="b" style="left:1714px;top:583.5px;" width="11" height="7" viewBox="0 0 11 7"><path d="M1 1.2l4.5 4.4L10 1.2" fill="none" stroke="#dfe5ef" stroke-width="1.15" stroke-linecap="round" stroke-linejoin="round"/></svg>
<span class="t " style="left:1735.00px;top:578.50px;font-size:12px;line-height:18px;color:#dfe5ef;font-weight:700;letter-spacing:-0.182px;">Source_IP_...</span>
<svg class="b" style="left:1814px;top:583.5px;" width="11" height="7" viewBox="0 0 11 7"><path d="M1 1.2l4.5 4.4L10 1.2" fill="none" stroke="#dfe5ef" stroke-width="1.15" stroke-linecap="round" stroke-linejoin="round"/></svg>
<div class="b" style="left:1831px;top:575px;width:55.5px;height:285px;overflow:hidden">
<span class="t " style="left:4.00px;top:3.50px;font-size:12px;line-height:18px;color:#dfe5ef;font-weight:700;letter-spacing:0.202px;">Destination_IP_Address</span>
<span class="t  m" style="left:16.30px;top:32.00px;font-size:12px;line-height:19px;color:#dfe5ef;">192.168.1.1</span>
<span class="t  m" style="left:16.30px;top:97.00px;font-size:12px;line-height:19px;color:#dfe5ef;">192.168.1.1</span>
<span class="t  m" style="left:16.30px;top:162.00px;font-size:12px;line-height:19px;color:#dfe5ef;">192.168.1.1</span>
<span class="t  m" style="left:16.30px;top:227.00px;font-size:12px;line-height:19px;color:#dfe5ef;">192.168.1.1</span>
</div>
<svg class="b" style="left:1279px;top:607px" width="12" height="12" viewBox="0 0 12 12"><path d="M1 11L11 1M7.6 1H11v3.4M1 7.6V11h3.4" fill="none" stroke="#9a9fab" stroke-width="1" stroke-linecap="round" stroke-linejoin="round"/></svg>
<div class="b" style="left:1301px;top:605.2px;width:16px;height:16px;background:#1d1e24;border:1px solid #6a6e7a;border-radius:4px;"></div>
<span class="t  m" style="left:1324.50px;top:607.00px;font-size:12px;line-height:19px;color:#dfe5ef;">Dec 15, 2023 @ 04:41:16.405</span>
<span class="t  m" style="left:1535.00px;top:607.00px;font-size:12px;line-height:19px;color:#dfe5ef;">Account</span>
<span class="t  m" style="left:1535.00px;top:626.00px;font-size:12px;line-height:19px;color:#dfe5ef;">Lockout</span>
<span class="t  m" style="left:1635.00px;top:607.00px;font-size:12px;line-height:19px;color:#dfe5ef;">Low</span>
<span class="t  m" style="left:1746.79px;top:607.00px;font-size:12px;line-height:19px;color:#dfe5ef;">192.168.1.7</span>
<svg class="b" style="left:1279px;top:672px" width="12" height="12" viewBox="0 0 12 12"><path d="M1 11L11 1M7.6 1H11v3.4M1 7.6V11h3.4" fill="none" stroke="#9a9fab" stroke-width="1" stroke-linecap="round" stroke-linejoin="round"/></svg>
<div class="b" style="left:1301px;top:670.2px;width:16px;height:16px;background:#1d1e24;border:1px solid #6a6e7a;border-radius:4px;"></div>
<span class="t  m" style="left:1324.50px;top:672.00px;font-size:12px;line-height:19px;color:#dfe5ef;">Dec 15, 2023 @ 02:12:23.002</span>
<span class="t  m" style="left:1535.00px;top:672.00px;font-size:12px;line-height:19px;color:#dfe5ef;">Account</span>
<span class="t  m" style="left:1535.00px;top:691.00px;font-size:12px;line-height:19px;color:#dfe5ef;">Lockout</span>
<span class="t  m" style="left:1635.00px;top:672.00px;font-size:12px;line-height:19px;color:#dfe5ef;">Medium</span>
<span class="t  m" style="left:1746.79px;top:672.00px;font-size:12px;line-height:19px;color:#dfe5ef;">192.168.1.6</span>
<svg class="b" style="left:1279px;top:737px" width="12" height="12" viewBox="0 0 12 12"><path d="M1 11L11 1M7.6 1H11v3.4M1 7.6V11h3.4" fill="none" stroke="#9a9fab" stroke-width="1" stroke-linecap="round" stroke-linejoin="round"/></svg>
<div class="b" style="left:1301px;top:735.2px;width:16px;height:16px;background:#1d1e24;border:1px solid #6a6e7a;border-radius:4px;"></div>
<span class="t  m" style="left:1324.50px;top:737.00px;font-size:12px;line-height:19px;color:#dfe5ef;">Dec 14, 2023 @ 22:41:38.379</span>
<span class="t  m" style="left:1535.00px;top:737.00px;font-size:12px;line-height:19px;color:#dfe5ef;">Account</span>
<span class="t  m" style="left:1535.00px;top:756.00px;font-size:12px;line-height:19px;color:#dfe5ef;">Lockout</span>
<span class="t  m" style="left:1635.00px;top:737.00px;font-size:12px;line-height:19px;color:#dfe5ef;">Medium</span>
<span class="t  m" style="left:1746.79px;top:737.00px;font-size:12px;line-height:19px;color:#dfe5ef;">192.168.1.4</span>
<div class="b" style="left:1273px;top:795.5px;width:558px;height:64.5px;overflow:hidden">
<svg class="b" style="left:6px;top:6.5px" width="12" height="12" viewBox="0 0 12 12"><path d="M1 11L11 1M7.6 1H11v3.4M1 7.6V11h3.4" fill="none" stroke="#9a9fab" stroke-width="1" stroke-linecap="round" stroke-linejoin="round"/></svg>
<div class="b" style="left:28px;top:4.7px;width:16px;height:16px;background:#1d1e24;border:1px solid #6a6e7a;border-radius:4px;"></div>
<span class="t  m" style="left:51.50px;top:6.50px;font-size:12px;line-height:19px;color:#dfe5ef;">Dec 14, 2023 @ 18:54:16.296</span>
<span class="t  m" style="left:262.00px;top:6.50px;font-size:12px;line-height:19px;color:#dfe5ef;">Account</span>
<span class="t  m" style="left:262.00px;top:25.50px;font-size:12px;line-height:19px;color:#dfe5ef;">Lockout</span>
<span class="t  m" style="left:362.00px;top:6.50px;font-size:12px;line-height:19px;color:#dfe5ef;">Medium</span>
<span class="t  m" style="left:473.79px;top:6.50px;font-size:12px;line-height:19px;color:#dfe5ef;">192.168.1.6</span>
</div>
<div class="b" style="left:1887px;top:575px;width:10px;height:285px;background:#1f2026;border-left:1px solid #2b2d35;"></div>
<svg class="b" style="left:1888.4px;top:577.5px;" width="7" height="4.5" viewBox="0 0 7 4.5"><path d="M0 4.5L3.5 0 7 4.5z" fill="#6f727e"/></svg>
<div class="b" style="left:1889.2px;top:587px;width:6px;height:60px;background:#5c5f6c;border-radius:3px;"></div>
<svg class="b" style="left:1888.4px;top:853px;" width="7" height="4.5" viewBox="0 0 7 4.5"><path d="M0 0h7L3.5 4.5z" fill="#6f727e"/></svg>
<div class="b" style="left:1896px;top:575px;width:1px;height:285px;background:#2b2d35;"></div>
<div class="b" style="left:1273px;top:859.5px;width:624px;height:10.5px;background:#1f2026;border-top:1px solid #343741;border-bottom:1px solid #343741;border-left:1px solid #2b2d35;"></div>
<svg class="b" style="left:1276px;top:862px;" width="5" height="7" viewBox="0 0 5 7"><path d="M5 0v7L0.6 3.5z" fill="#7b7e8a"/></svg>
<div class="b" style="left:1285px;top:862px;width:477px;height:6px;background:#5c5f6c;border-radius:3px;"></div>
<svg class="b" style="left:1881px;top:862px;" width="5" height="7" viewBox="0 0 5 7"><path d="M0 0v7l4.4-3.5z" fill="#7b7e8a"/></svg>
<span class="t " style="left:1281.00px;top:881.00px;font-size:12px;line-height:18px;color:#dfe5ef;font-weight:700;letter-spacing:0.016px;">Rows per page: 100</span>
<svg class="b" style="left:1402.5px;top:887px;" width="11" height="7" viewBox="0 0 11 7"><path d="M1 1.2l4.5 4.4L10 1.2" fill="none" stroke="#dfe5ef" stroke-width="1.15" stroke-linecap="round" stroke-linejoin="round"/></svg>
<svg class="b" style="left:1834px;top:884px;" width="8" height="12" viewBox="0 0 8 12"><path d="M6.4 1L1.6 6l4.8 5" fill="none" stroke="#6d717d" stroke-width="1.1" stroke-linecap="round" stroke-linejoin="round"/></svg>
<span class="t " style="left:1858.00px;top:881.00px;font-size:12px;line-height:18px;color:#36a2ef;font-weight:700;letter-spacing:0.326px;text-decoration:underline;text-underline-offset:2px;">1</span>
<svg class="b" style="left:1880.5px;top:884px;" width="8" height="12" viewBox="0 0 8 12"><path d="M1.6 1l4.8 5-4.8 5" fill="none" stroke="#6d717d" stroke-width="1.1" stroke-linecap="round" stroke-linejoin="round"/></svg>
<div class="panel" style="left:8px;top:914px;width:941px;height:120px"></div>
<span class="t " style="left:16.00px;top:917.00px;font-size:12px;line-height:18px;color:#dfe5ef;font-weight:700;letter-spacing:0.074px;">Top Source IPs</span>
<div class="b" style="left:16px;top:946px;width:914px;height:1px;background:#343741;"></div>
<span class="t " style="left:22.00px;top:951.50px;font-size:14px;line-height:21px;color:#dfe5ef;font-weight:700;letter-spacing:0.063px;">Source_IP_Address: Descending</span>
<svg class="b" style="left:456.5px;top:959px;" width="11" height="7" viewBox="0 0 11 7"><path d="M1 1.2l4.5 4.4L10 1.2" fill="none" stroke="#dfe5ef" stroke-width="1.15" stroke-linecap="round" stroke-linejoin="round"/></svg>
<span class="t " style="left:479.50px;top:951.50px;font-size:14px;line-height:21px;color:#dfe5ef;font-weight:700;letter-spacing:0.414px;">Count</span>
<svg class="b" style="left:913px;top:959px;" width="11" height="7" viewBox="0 0 11 7"><path d="M1 1.2l4.5 4.4L10 1.2" fill="none" stroke="#dfe5ef" stroke-width="1.15" stroke-linecap="round" stroke-linejoin="round"/></svg>
<div class="b" style="left:16px;top:976px;width:914px;height:2px;background:#ffffff;"></div>
<div class="b" style="left:930px;top:946px;width:1px;height:45px;background:#2b2d35;"></div>
<svg class="b" style="left:932.8px;top:948.8px;" width="6.4" height="4.6" viewBox="0 0 6.4 4.6"><path d="M0 4.6L3.2 0 6.4 4.6z" fill="#6f727e"/></svg>
<div class="b" style="left:933px;top:958px;width:6px;height:40px;background:#5c5f6c;border-radius:3px;"></div>
<div class="panel" style="left:956px;top:914px;width:941px;height:120px"></div>
<span class="t " style="left:964.00px;top:917.00px;font-size:12px;line-height:18px;color:#dfe5ef;font-weight:700;letter-spacing:0.138px;">MITRE ATT&amp;CK - Technique Coverage</span>
<svg class="b" style="left:1187px;top:920px;" width="12" height="12" viewBox="0 0 12 12"><g fill="none" stroke="#9a9fab" stroke-width="1"><circle cx="6" cy="6" r="5.4"/></g><rect x="5.5" y="5.2" width="1" height="3.6" fill="#9a9fab"/><rect x="5.5" y="3.2" width="1" height="1.1" fill="#9a9fab"/></svg>
<div class="b" style="left:1140px;top:955.5px;width:739.5px;height:15px;background:#54b399;"></div>
<div class="b" style="left:1140px;top:976px;width:41.5px;height:15px;background:#54b399;"></div>
<span class="t " style="left:1076.00px;top:955.30px;font-size:10.5px;line-height:14px;color:#8b8f9a;letter-spacing:0.134px;">Information</span>
<span class="t " style="left:1035.50px;top:975.30px;font-size:10.5px;line-height:14px;color:#8b8f9a;letter-spacing:0.061px;">Blocked Connection</span>
<div class="b" style="left:0px;top:987.5px;width:1905px;height:3.5px;background:linear-gradient(rgba(34,32,56,0),rgba(34,32,56,.8));"></div>
<div class="b" style="left:1905px;top:0px;width:15px;height:991px;background:#222529;"></div>
<svg class="b" style="left:1908px;top:4.5px;" width="9" height="5.5" viewBox="0 0 9 5.5"><path d="M0 5.5L4.5 0 9 5.5z" fill="#5b5d69"/></svg>
<div class="b" style="left:1908px;top:16px;width:9px;height:499px;background:#606373;border-radius:4.5px;"></div>
<svg class="b" style="left:1908.5px;top:973px;" width="8" height="5" viewBox="0 0 8 5"><path d="M0 0h8L4 5z" fill="#686b78"/></svg>
</div>
</body></html>
